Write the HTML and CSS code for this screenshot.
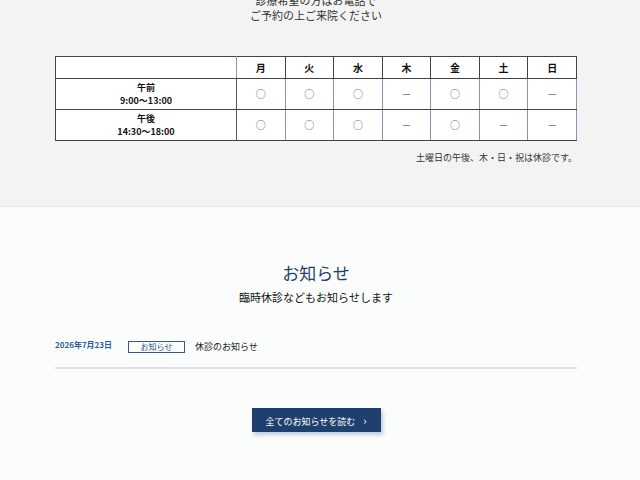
FILE: index.html
```html
<!DOCTYPE html>
<html lang="ja">
<head>
    <meta charset="UTF-8">
    <meta name="viewport" content="width=device-width, initial-scale=1.0">
    <title>診療時間・お知らせ</title>
    <link rel="stylesheet" href="styles.css">
</head>
<body>
    <section class="hours">
        <div class="inner">
            <p class="intro">診療希望の方はお電話で<br>ご予約の上ご来院ください</p>
            <table class="schedule">
                <tr>
                    <th class="time"></th>
                    <th>月</th><th>火</th><th>水</th><th>木</th><th>金</th><th>土</th><th>日</th>
                </tr>
                <tr>
                    <th class="time"><span class="label">午前</span><span class="label">9:00〜13:00</span></th>
                    <td>○</td><td>○</td><td>○</td><td>－</td><td>○</td><td>○</td><td>－</td>
                </tr>
                <tr>
                    <th class="time"><span class="label">午後</span><span class="label">14:30〜18:00</span></th>
                    <td>○</td><td>○</td><td>○</td><td>－</td><td>○</td><td>－</td><td>－</td>
                </tr>
            </table>
            <p class="note">土曜日の午後、木・日・祝は休診です。</p>
        </div>
    </section>

    <section class="news">
        <div class="inner">
            <h2 class="news-title">お知らせ</h2>
            <p class="news-sub">臨時休診などもお知らせします</p>
            <ul class="news-list">
                <li class="news-item">
                    <span class="news-date">2026年7月23日</span>
                    <span class="news-tag">お知らせ</span>
                    <a class="news-link" href="#">休診のお知らせ</a>
                </li>
            </ul>
            <div class="more">
                <a class="more-button" href="#">全てのお知らせを読む<span class="arrow">›</span></a>
            </div>
        </div>
    </section>
</body>
</html>
```

FILE: styles.css
```css
body {
    font-family: "Noto Sans CJK JP", "Liberation Sans", sans-serif;
    margin: 0;
    padding: 0;
    color: #222;
}

.hours,
.news {
    padding-right: 8px;
}

.inner {
    width: 522px;
    margin: 0 auto;
}

/* 診療時間 */
.hours {
    background-color: #f3f3f3;
    border-bottom: 1px solid #e8e8e8;
    padding-bottom: 42px;
}
.intro {
    margin: -7px 0 0;
    text-align: center;
    font-size: 11px;
    line-height: 15px;
    color: #333;
}
.schedule {
    margin-top: 33px;
    width: 522px;
    border-collapse: collapse;
    background-color: #fff;
    border: 1px solid #333;
    table-layout: fixed;
}
.schedule th,
.schedule td {
    border: 1px solid #444;
    text-align: center;
    font-size: 10px;
    line-height: 12px;
    padding: 0;
}
.schedule th {
    font-weight: bold;
    height: 21px;
    color: #111;
}
.schedule th.time {
    width: 180px;
    height: 30px;
    font-size: 9px;
    border-right-color: #555;
}
.schedule th.time .label {
    display: block;
    height: 13px;
    line-height: 13px;
}
.schedule tr:first-child th.time {
    height: 21px;
    border-right-color: #8795b5;
}
.schedule td {
    border-left-color: #8795b5;
    border-right-color: #8795b5;
    color: #666;
    height: 30px;
}
.note {
    margin: 10px 0 0;
    text-align: right;
    font-size: 9px;
    color: #333;
}

/* お知らせ */
.news {
    background-color: #fbfdfc;
    padding-top: 54px;
    padding-bottom: 60px;
}
.news-title {
    margin: 0;
    text-align: center;
    font-size: 17px;
    font-weight: normal;
    color: #1f3f6e;
    line-height: 24px;
}
.news-sub {
    margin: 4px 0 0;
    text-align: center;
    font-size: 11px;
    font-weight: normal;
    color: #111;
}
.news-list {
    list-style: none;
    margin: 27px 0 0;
    padding: 0;
}
.news-item {
    display: flex;
    align-items: center;
    padding: 8px 0 14px;
    border-bottom: 2px solid #e0e0e0;
}
.news-date {
    width: 73px;
    font-size: 8px;
    font-weight: bold;
    color: #2d5b98;
    margin-top: -4px;
}
.news-tag {
    width: 55px;
    height: 10px;
    line-height: 10px;
    border: 1px solid #34578c;
    text-align: center;
    font-size: 8px;
    color: #24508c;
    margin-right: 10px;
}
.news-link {
    font-size: 9px;
    color: #222;
    text-decoration: none;
}
.more {
    margin-top: 37px;
    text-align: center;
}
.more-button {
    display: inline-block;
    width: 129px;
    height: 24px;
    line-height: 24px;
    background-color: #1f3f6e;
    color: #fff;
    font-size: 9px;
    text-decoration: none;
    box-shadow: 2px 3px 4px rgba(60, 90, 140, 0.3);
}
.arrow {
    margin-left: 8px;
    font-size: 11px;
}
```
